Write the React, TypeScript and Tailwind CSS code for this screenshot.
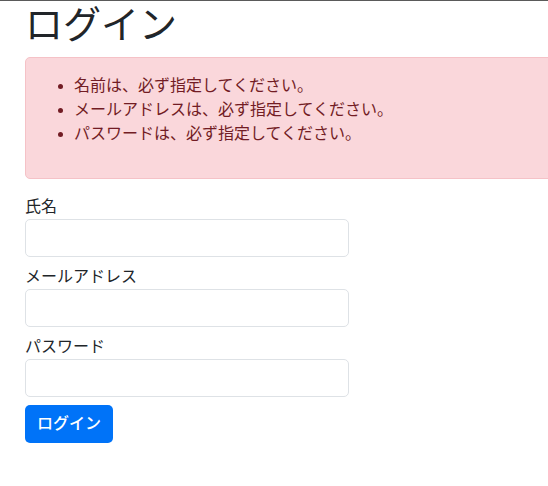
const errors = [
  "名前は、必ず指定してください。",
  "メールアドレスは、必ず指定してください。",
  "パスワードは、必ず指定してください。",
];

const fields = ["氏名", "メールアドレス", "パスワード"];

export default function App() {
  return (
    <div
      className="min-h-[486px] w-[548px] overflow-hidden border-t border-[#5a5a5a] bg-white text-[#212529]"
      style={{ fontFamily: '"Liberation Sans", "Noto Sans CJK JP", sans-serif' }}
    >
      <div className="w-[640px] px-[25px]">
        <h1 className="mb-2 text-[38px] font-normal leading-[48px]">ログイン</h1>

        {/* alert-danger */}
        <div className="mb-4 rounded-[5px] border border-[#f5c2c7] bg-[#fad7db] p-4 text-base leading-6 text-[#721c24]">
          <ul className="mb-4 list-disc pl-8">
            {errors.map((e) => (
              <li key={e}>{e}</li>
            ))}
          </ul>
        </div>

        <form className="w-[324px]">
          {fields.map((f) => (
            <div key={f} className="mb-2">
              <label className="block text-base leading-6">{f}</label>
              <input
                type={f === "パスワード" ? "password" : "text"}
                className="block h-[38px] w-full rounded-[5px] border border-[#dee2e6] bg-white px-3 text-base focus:outline-none"
              />
            </div>
          ))}
          <button
            type="button"
            className="h-[38px] rounded-[5px] bg-[#0073f8] px-3 text-base font-medium leading-6 text-white"
          >
            ログイン
          </button>
        </form>
      </div>
    </div>
  );
}
